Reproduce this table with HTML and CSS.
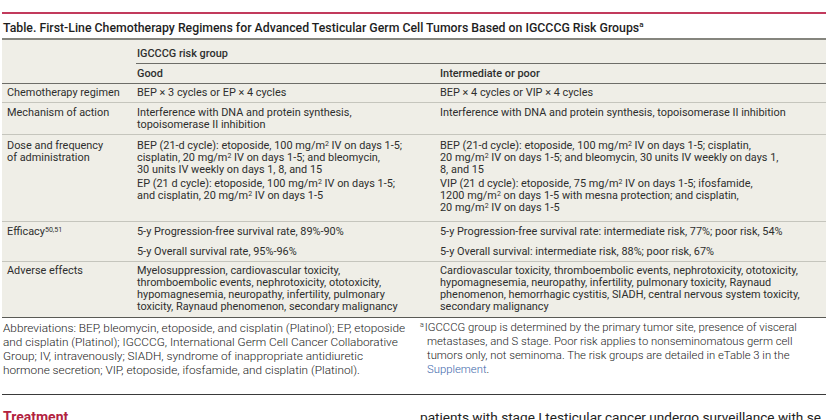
FILE: index.html
```html
<!DOCTYPE html>
<html lang="en">
<head>
<meta charset="utf-8">
<title>Table – First-Line Chemotherapy Regimens</title>
<link rel="stylesheet" href="styles.css">
</head>
<body>
<div class="page">
  <div class="rule-red"></div>
  <h1 class="title">Table. First-Line Chemotherapy Regimens for Advanced Testicular Germ Cell Tumors Based on IGCCCG Risk Groups<sup>a</sup></h1>
  <table class="tbl">
    <colgroup><col class="c1"><col class="c2"><col class="c3"></colgroup>
    <thead>
      <tr class="hrow1"><th></th><th colspan="2" class="grp"><span>IGCCCG risk group</span></th></tr>
      <tr class="hrow2"><th></th><th>Good</th><th>Intermediate or poor</th></tr>
    </thead>
    <tbody>
      <tr class="r-chemo">
        <td>Chemotherapy regimen</td>
        <td>BEP × 3 cycles or EP × 4 cycles</td>
        <td>BEP × 4 cycles or VIP × 4 cycles</td>
      </tr>
      <tr class="r-mech">
        <td>Mechanism of action</td>
        <td>Interference with DNA and protein synthesis,<br>topoisomerase II inhibition</td>
        <td>Interference with DNA and protein synthesis, topoisomerase II inhibition</td>
      </tr>
      <tr class="r-dose lead">
        <td rowspan="2">Dose and frequency<br>of administration</td>
        <td>BEP (21-d cycle): etoposide, 100 mg/m<sup>2</sup> IV on days 1-5;<br>cisplatin, 20 mg/m<sup>2</sup> IV on days 1-5; and bleomycin,<br>30 units IV weekly on days 1, 8, and 15</td>
        <td>BEP (21-d cycle): etoposide, 100 mg/m<sup>2</sup> IV on days 1-5; cisplatin,<br>20 mg/m<sup>2</sup> IV on days 1-5; and bleomycin, 30 units IV weekly on days 1,<br>8, and 15</td>
      </tr>
      <tr class="r-dose cont">
        <td>EP (21 d cycle): etoposide, 100 mg/m<sup>2</sup> IV on days 1-5;<br>and cisplatin, 20 mg/m<sup>2</sup> IV on days 1-5</td>
        <td>VIP (21 d cycle): etoposide, 75 mg/m<sup>2</sup> IV on days 1-5; ifosfamide,<br>1200 mg/m<sup>2</sup> on days 1-5 with mesna protection; and cisplatin,<br>20 mg/m<sup>2</sup> IV on days 1-5</td>
      </tr>
      <tr class="r-eff lead">
        <td rowspan="2">Efficacy<sup>50,51</sup></td>
        <td>5-y Progression-free survival rate, 89%-90%</td>
        <td>5-y Progression-free survival rate: intermediate risk, 77%; poor risk, 54%</td>
      </tr>
      <tr class="r-eff cont">
        <td>5-y Overall survival rate, 95%-96%</td>
        <td>5-y Overall survival: intermediate risk, 88%; poor risk, 67%</td>
      </tr>
      <tr class="r-adv">
        <td>Adverse effects</td>
        <td>Myelosuppression, cardiovascular toxicity,<br>thromboembolic events, nephrotoxicity, ototoxicity,<br>hypomagnesemia, neuropathy, infertility, pulmonary<br>toxicity, Raynaud phenomenon, secondary malignancy</td>
        <td>Cardiovascular toxicity, thromboembolic events, nephrotoxicity, ototoxicity,<br>hypomagnesemia, neuropathy, infertility, pulmonary toxicity, Raynaud<br>phenomenon, hemorrhagic cystitis, SIADH, central nervous system toxicity,<br>secondary malignancy</td>
      </tr>
    </tbody>
  </table>
  <div class="notes">
    <p class="note">Abbreviations: BEP, bleomycin, etoposide, and cisplatin (Platinol); EP, etoposide<br>and cisplatin (Platinol); IGCCCG, International Germ Cell Cancer Collaborative<br>Group; IV, intravenously; SIADH, syndrome of inappropriate antidiuretic<br>hormone secretion; VIP, etoposide, ifosfamide, and cisplatin (Platinol).</p>
    <p class="note fn"><sup>a</sup>IGCCCG group is determined by the primary tumor site, presence of visceral<br>metastases, and S stage. Poor risk applies to nonseminomatous germ cell<br>tumors only, not seminoma. The risk groups are detailed in eTable 3 in the<br><a class="link" href="#">Supplement</a>.</p>
  </div>
  <div class="rule-end"></div>
  <div class="next">
    <h2 class="section">Treatment</h2>
    <p class="body">patients with stage I testicular cancer undergo surveillance with se</p>
  </div>
</div>
</body>
</html>
```

FILE: styles.css
```css
* { box-sizing: border-box; }
html, body { margin: 0; padding: 0; background: #fff; }
body { font-family: Roboto, "Liberation Sans", sans-serif; color: #2b2b2b; }

.page { width: 832px; padding: 12px 6px 0 2px; }

.rule-red { height: 2px; background: #c23a5c; width: 824px; }

.title {
  margin: 0;
  padding: 6px 0 0 1px;
  height: 24px;
  font-size: 12.3px;
  line-height: 16px;
  font-weight: 500;
  color: #1e1e1e;
  white-space: nowrap;
}
.title sup { font-size: 8px; line-height: 0; vertical-align: 5px; }

.tbl {
  width: 824px;
  border-collapse: collapse;
  background: #efeee7;
  border-top: 2px solid #85857e;
  border-bottom: 1px solid #5a5a55;
  font-size: 10.9px;
  line-height: 12px;
  color: #2e2e2e;
}
.c1 { width: 130px; }
.c2 { width: 303px; }
.c3 { width: 391px; }

.tbl th, .tbl td {
  text-align: left;
  vertical-align: top;
  padding: 3px 4px 3px 5px;
  white-space: nowrap;
}
.tbl th { font-weight: 500; color: #2e2e2e; }

.hrow1 th { padding: 8px 0 0 0; }
.hrow1 th.grp { padding-left: 4px; }
.grp span { display: block; padding: 0 0 3px 1px; border-bottom: 1px solid #6d6d68; }
.hrow2 th { padding-top: 4px; padding-bottom: 3px; border-bottom: 1.5px solid #6d6d68; }

.tbl tbody tr { border-bottom: 1px solid #c5c5bd; }
.tbl tbody tr.lead { border-bottom: none; }
.tbl tbody tr.r-adv { border-bottom: none; }

.r-chemo td { padding-top: 3px; padding-bottom: 3px; }
.r-mech td { padding-top: 4px; padding-bottom: 3px; }
.r-dose.lead td { padding-top: 5px; padding-bottom: 1px; }
.r-dose.cont td { padding-top: 1px; padding-bottom: 7px; }
.r-eff.lead td { padding-top: 4px; padding-bottom: 4px; }
.r-eff.cont td { padding-top: 4px; padding-bottom: 3px; }
.r-adv td { padding-top: 3px; padding-bottom: 4px; }

.tbl sup { font-size: 7px; line-height: 0; vertical-align: 3px; }

.notes {
  display: grid;
  grid-template-columns: 418px 406px;
  padding-top: 3px;
  height: 76px;
}
.note {
  margin: 0;
  font-size: 11.8px;
  line-height: 14px;
  font-weight: 300;
  color: #222;
  white-space: nowrap;
  padding-left: 1px;
}
.note.fn { font-size: 11.3px; padding-left: 7px; text-indent: -7px; }
.note.fn sup { font-size: 7px; line-height: 0; vertical-align: 4px; padding-right: 1px; }
.link { color: #3b66aa; text-decoration: none; }

.rule-end { height: 1px; background: #3a3a3a; width: 824px; }

.next {
  display: grid;
  grid-template-columns: 418px 406px;
  padding-top: 13px;
}
.section {
  margin: 0;
  padding-left: 1px;
  font-size: 14px;
  line-height: 18px;
  font-weight: 700;
  color: #b2223f;
}
.body {
  margin: 0;
  font-size: 13.6px;
  line-height: 18px;
  color: #222;
  white-space: nowrap;
}
```
